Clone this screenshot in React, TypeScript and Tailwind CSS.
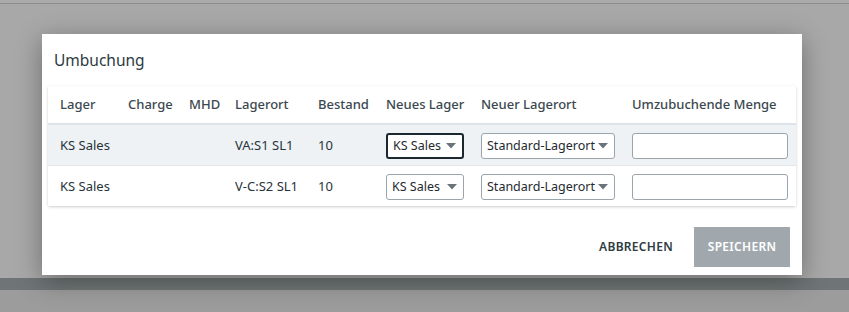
import React from "react";

const font = { fontFamily: '"Noto Sans", "Open Sans", Arial, sans-serif' };

function Select({ label, w, focused }: { label: string; w: string; focused?: boolean }) {
  return (
    <div
      className={`flex items-center justify-between h-[26px] rounded-[3px] bg-white pl-[5px] pr-[6px] text-[12.5px] text-[#1f2a30] ${w} ${
        focused ? "border-2 border-[#1c2830] pl-[4px] pr-[5px]" : "border border-[#9aa4ab]"
      }`}
    >
      <span>{label}</span>
      <svg width="10" height="6" viewBox="0 0 10 6">
        <path d="M0 0 L10 0 L5 5.5 Z" fill="#6b747a" />
      </svg>
    </div>
  );
}

function Row({ lagerort, focused, shaded }: { lagerort: string; focused?: boolean; shaded?: boolean }) {
  return (
    <div className={`flex items-center h-[40px] pt-[2px] text-[13px] text-[#27333a] ${shaded ? "bg-[#eef2f5]" : "bg-white"}`}>
      <div className="w-[80px] pl-[12px]">KS Sales</div>
      <div className="w-[61px]" />
      <div className="w-[46px]" />
      <div className="w-[83px]">{lagerort}</div>
      <div className="w-[68px]">10</div>
      <div className="w-[95px]">
        <Select label="KS Sales" w="w-[78px]" focused={focused} />
      </div>
      <div className="w-[151px]">
        <Select label="Standard-Lagerort" w="w-[134px]" />
      </div>
      <div className="flex-1 pr-[8px]">
        <div className="h-[26px] rounded-[3px] border border-[#9aa4ab] bg-white" />
      </div>
    </div>
  );
}

export default function App() {
  return (
    <div className="relative w-[849px] h-[312px] overflow-hidden bg-[#a8a8a8]" style={font}>
      <div className="h-[3px] bg-[#ababab]" />
      <div className="h-px bg-[#8c8c8c]" />
      <div className="h-[274px]" />
      <div className="h-[12px] bg-[#6f7576]" />
      <div className="h-[22px] bg-[#9c9c9c]" />

      <div className="absolute left-[42px] top-[34px] w-[760px] h-[241px] bg-white shadow-[0_6px_24px_rgba(0,0,0,0.35)] flex flex-col">
        <div className="pl-[12px] pt-[14px] h-[52px] text-[15.5px] leading-[24px] text-[#2c3a42]">Umbuchung</div>
        <div className="mx-[6px] shadow-[0_1px_3px_rgba(0,0,0,0.2)] rounded-[2px]">
          <div className="flex items-center h-[39px] pt-[1px] text-[13px] font-medium text-[#3b4850] border-b-2 border-[#dde3e8]">
            <div className="w-[80px] pl-[12px]">Lager</div>
            <div className="w-[61px]">Charge</div>
            <div className="w-[46px]">MHD</div>
            <div className="w-[83px]">Lagerort</div>
            <div className="w-[68px]">Bestand</div>
            <div className="w-[95px]">Neues Lager</div>
            <div className="w-[151px]">Neuer Lagerort</div>
            <div className="flex-1">Umzubuchende Menge</div>
          </div>
          <div className="border-b border-[#e3e7ea]">
            <Row lagerort="VA:S1 SL1" focused shaded />
          </div>
          <Row lagerort="V-C:S2 SL1" />
        </div>
        <div className="flex justify-end items-center gap-[13px] pr-[12px] pt-[21px]">
          <button className="h-[40px] px-[8px] text-[12px] font-semibold tracking-[0.3px] text-[#2f3c44]">ABBRECHEN</button>
          <button className="h-[40px] w-[96px] bg-[#a0a8ae] text-[12px] font-semibold tracking-[0.3px] text-white">SPEICHERN</button>
        </div>
      </div>
    </div>
  );
}
